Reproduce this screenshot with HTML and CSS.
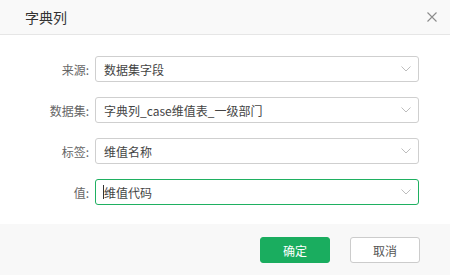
FILE: index.html
```html
<!DOCTYPE html>
<html lang="zh-CN">
<head>
    <meta charset="UTF-8">
    <title>字典列</title>
    <link rel="stylesheet" href="styles.css">
</head>
<body>
    <div class="dialog">
        <div class="dialog-header">
            <span class="dialog-title">字典列</span>
            <svg class="close-icon" width="10" height="10" viewBox="0 0 10 10">
                <path d="M0.5 0.5 L9.5 9.5 M9.5 0.5 L0.5 9.5" stroke="#8c8c8c" stroke-width="1.1" fill="none"/>
            </svg>
        </div>
        <div class="dialog-body">
            <div class="form-row">
                <label class="form-label">来源:</label>
                <div class="select">
                    <span class="select-value">数据集字段</span>
                    <svg class="chevron" width="10" height="6" viewBox="0 0 10 6"><polyline points="0.5,0.5 5,5 9.5,0.5" stroke="#bdbdbd" fill="none"/></svg>
                </div>
            </div>
            <div class="form-row">
                <label class="form-label">数据集:</label>
                <div class="select">
                    <span class="select-value">字典列_case维值表_一级部门</span>
                    <svg class="chevron" width="10" height="6" viewBox="0 0 10 6"><polyline points="0.5,0.5 5,5 9.5,0.5" stroke="#bdbdbd" fill="none"/></svg>
                </div>
            </div>
            <div class="form-row">
                <label class="form-label">标签:</label>
                <div class="select">
                    <span class="select-value">维值名称</span>
                    <svg class="chevron" width="10" height="6" viewBox="0 0 10 6"><polyline points="0.5,0.5 5,5 9.5,0.5" stroke="#bdbdbd" fill="none"/></svg>
                </div>
            </div>
            <div class="form-row">
                <label class="form-label">值:</label>
                <div class="select select-active">
                    <span class="caret"></span>
                    <span class="select-value">维值代码</span>
                    <svg class="chevron" width="10" height="6" viewBox="0 0 10 6"><polyline points="0.5,0.5 5,5 9.5,0.5" stroke="#bdbdbd" fill="none"/></svg>
                </div>
            </div>
        </div>
        <div class="dialog-footer">
            <button class="btn btn-primary">确定</button>
            <button class="btn btn-default">取消</button>
        </div>
    </div>
</body>
</html>
```
FILE: styles.css
```css
html, body {
    margin: 0;
    padding: 0;
    background-color: #fff;
}
body {
    font-family: "Noto Sans CJK SC", "Liberation Sans", sans-serif;
    font-size: 12px;
    color: #333;
}
.dialog {
    width: 450px;
    height: 275px;
    display: flex;
    flex-direction: column;
    background-color: #fff;
}
.dialog-header {
    height: 34px;
    flex: none;
    display: flex;
    align-items: center;
    justify-content: space-between;
    padding: 0 13px 0 25px;
    background-color: #f9f9f9;
    border-bottom: 1px solid #e6e6e6;
}
.dialog-title {
    font-size: 14px;
    color: #333;
}
.close-icon {
    display: block;
}
.dialog-body {
    flex: 1;
    padding: 21px 31px 0 0;
    display: flex;
    flex-direction: column;
    gap: 15px;
}
.form-row {
    display: flex;
    align-items: center;
    height: 26px;
}
.form-label {
    width: 95px;
    flex: none;
    box-sizing: border-box;
    padding-right: 6px;
    text-align: right;
    color: #666;
}
.select {
    flex: 1;
    height: 26px;
    box-sizing: border-box;
    border: 1px solid #cfcfcf;
    border-radius: 3px;
    display: flex;
    align-items: center;
    padding: 0 7px 0 8px;
    position: relative;
}
.select-value {
    flex: 1;
    color: #444;
}
.select-active {
    border-color: #1fb061;
}
.caret {
    position: absolute;
    left: 7px;
    top: 5px;
    width: 1px;
    height: 14px;
    background-color: #333;
}
.chevron {
    display: block;
}
.dialog-footer {
    height: 51px;
    flex: none;
    box-sizing: border-box;
    background-color: #f8f8f8;
    display: flex;
    justify-content: flex-end;
    align-items: flex-start;
    gap: 20px;
    padding: 13px 30px 0 0;
}
.btn {
    width: 70px;
    height: 26px;
    border-radius: 3px;
    font-family: inherit;
    font-size: 12px;
    padding: 0;
    cursor: pointer;
}
.btn-primary {
    background-color: #1aad5f;
    border: 1px solid #1aad5f;
    color: #fff;
}
.btn-default {
    background-color: #fff;
    border: 1px solid #cccccc;
    color: #555;
}
```
